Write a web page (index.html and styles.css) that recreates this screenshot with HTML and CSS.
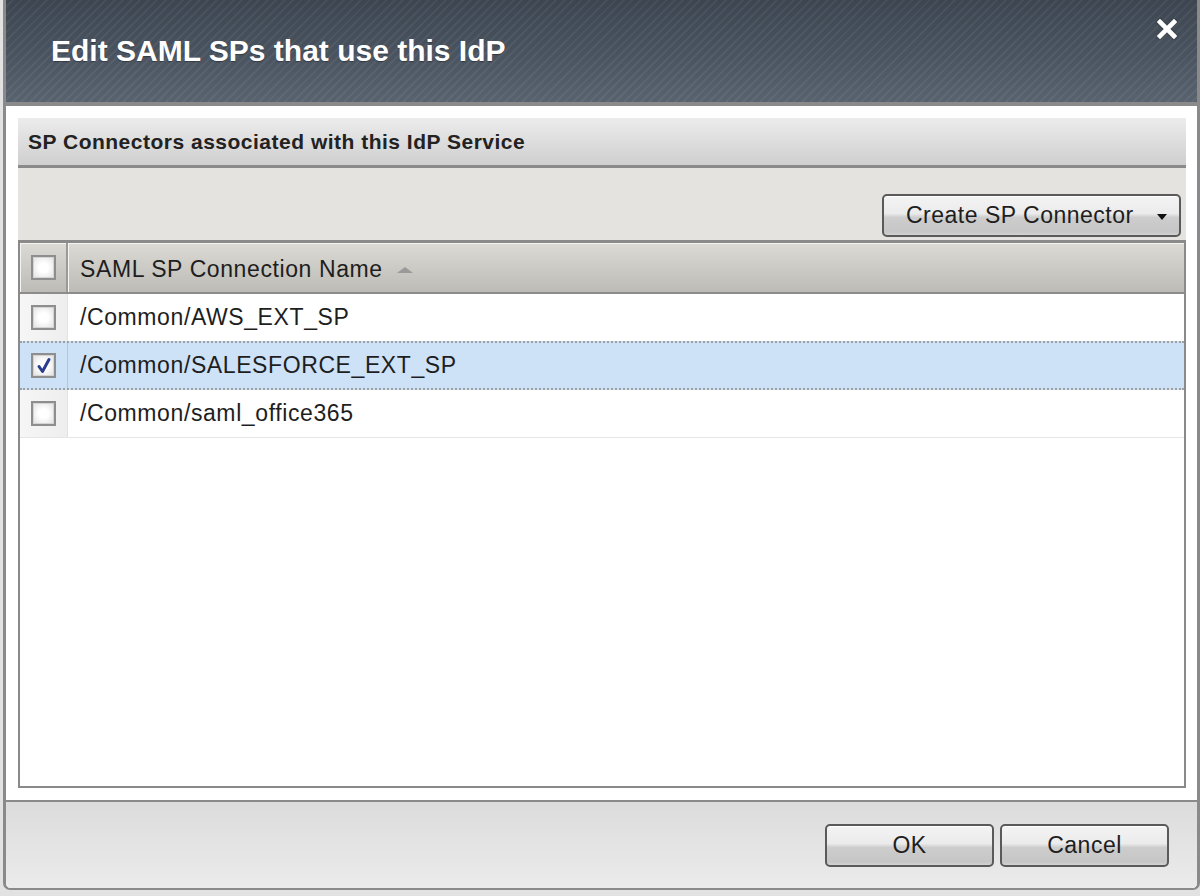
FILE: index.html
```html
<!DOCTYPE html>
<html lang="en">
<head>
<meta charset="utf-8">
<title>Edit SAML SPs that use this IdP</title>
<link rel="stylesheet" href="styles.css">
</head>
<body>
<div class="dialog">
  <div class="titlebar">
    <h1 class="title">Edit SAML SPs that use this IdP</h1>
    <button class="close" aria-label="Close">
      <svg width="20" height="20" viewBox="0 0 20 20"><path d="M3 3 L17 17 M17 3 L3 17" stroke="#fff" stroke-width="4.6" stroke-linecap="square" fill="none"/></svg>
    </button>
  </div>
  <div class="body">
    <div class="section">
      <div class="section-head">SP Connectors associated with this IdP Service</div>
      <div class="toolbar">
        <button class="btn btn-menu">Create SP Connector <span class="caret"></span></button>
      </div>
      <div class="grid">
        <div class="row head">
          <div class="cell-check"><span class="cb"></span></div>
          <div class="cell-name">SAML SP Connection Name <span class="sort"></span></div>
        </div>
        <div class="row">
          <div class="cell-check"><span class="cb"></span></div>
          <div class="cell-name">/Common/AWS_EXT_SP</div>
        </div>
        <div class="row selected">
          <div class="cell-check"><span class="cb checked"><svg width="18" height="18" viewBox="0 0 18 18"><path d="M4 9.5 L7.5 14.5 L14 2.5" stroke="#2b3d8f" stroke-width="3" fill="none" stroke-linejoin="round" stroke-linecap="round"/></svg></span></div>
          <div class="cell-name">/Common/SALESFORCE_EXT_SP</div>
        </div>
        <div class="row">
          <div class="cell-check"><span class="cb"></span></div>
          <div class="cell-name">/Common/saml_office365</div>
        </div>
      </div>
    </div>
  </div>
  <div class="footer">
    <button class="btn btn-foot">OK</button>
    <button class="btn btn-foot">Cancel</button>
  </div>
</div>
</body>
</html>
```
FILE: styles.css
```css
* { box-sizing: border-box; }
html, body { margin: 0; padding: 0; }
body {
  background: #e2e2e2;
  font-family: "Liberation Sans", Arial, sans-serif;
  color: #1e1e1e;
  width: 1200px;
  height: 896px;
  overflow: hidden;
}
.dialog {
  margin-left: 3px;
  width: 1197px;
  border-style: solid;
  border-color: #8a8a8a;
  border-width: 0 3px 2px 3px;
  border-radius: 0 0 7px 7px;
  overflow: hidden;
  background: #fff;
}
.titlebar {
  height: 106px;
  border-bottom: 4px solid #8a8a8a;
  display: flex;
  align-items: flex-start;
  background:
    repeating-linear-gradient(135deg, rgba(255,255,255,0) 0px, rgba(255,255,255,0) 4px, rgba(255,255,255,0.05) 4px, rgba(255,255,255,0.05) 6px),
    linear-gradient(#3c4550 0%, #4a5460 55%, #58636f 100%);
}
.title {
  flex: 1;
  margin: 0;
  padding: 0 0 0 45px;
  line-height: 102px;
  height: 102px;
  font-size: 30px;
  font-weight: bold;
  color: #fff;
  text-shadow: 0 1px 1px rgba(0,0,0,0.35);
}
.close {
  margin: 19px 20px 0 0;
  padding: 0;
  border: 0;
  background: none;
  width: 20px;
  height: 20px;
  filter: drop-shadow(0 0 1px rgba(0,0,0,0.4));
}
.close svg { display: block; }
.body {
  padding: 12px 11px 12px 12px;
  background: #fff;
}
.section { display: flex; flex-direction: column; }
.section-head {
  height: 50px;
  border-bottom: 3px solid #8a8a8a;
  background: linear-gradient(#ececec, #cfcfcf);
  padding-left: 10px;
  line-height: 48px;
  font-size: 21px;
  letter-spacing: 0.5px;
  font-weight: bold;
  color: #222;
}
.toolbar {
  height: 72px;
  background: #e4e3df;
  display: flex;
  justify-content: flex-end;
  align-items: flex-end;
  padding: 0 5px 3px 0;
}
.btn {
  font-family: "Liberation Sans", Arial, sans-serif;
  font-size: 23px;
  letter-spacing: 0.5px;
  color: #1e1e1e;
  border: 2px solid #5a5a5a;
  border-radius: 5px;
  background: linear-gradient(#f4f4f4 0%, #ebebeb 45%, #cdcdcd 55%, #c6c6c6 92%, #d4d4d4 100%);
  height: 43px;
  padding: 0;
  display: inline-flex;
  align-items: center;
  justify-content: center;
  box-shadow: inset 0 1px 0 #fff;
}
.btn-menu {
  width: 299px;
  padding: 0 12px 0 22px;
  justify-content: space-between;
}
.caret {
  width: 0;
  height: 0;
  border-left: 5px solid transparent;
  border-right: 5px solid transparent;
  border-top: 6px solid #111;
  margin-top: 2px;
}
.grid {
  height: 548px;
  border: 2px solid #8a8a8a;
  border-top-width: 3px;
  background: #fff;
}
.row {
  display: flex;
  height: 48px;
  border-bottom: 1px solid #e6e6e6;
  font-size: 23px;
  letter-spacing: 0.6px;
}
.row.head {
  height: 51px;
  border-bottom: 2px solid #8c8c8c;
  background: linear-gradient(#dcdad4, #bdbbb5);
  box-shadow: inset 0 1px 0 #f4f4f2, inset 1px 0 0 #f4f4f2;
}
.cell-check {
  width: 48px;
  flex: none;
  display: flex;
  align-items: center;
  justify-content: center;
  border-right: 1px solid #e2e2e2;
  background: linear-gradient(90deg, #f6f6f6, #eeeeee);
}
.row.head .cell-check {
  background: none;
  border-right: 2px solid #9a9a98;
  box-shadow: 1px 0 0 #f6f6f4;
}
.cell-name {
  flex: 1;
  display: flex;
  align-items: center;
  padding-left: 12px;
}
.row.head .cell-name { padding-top: 3px; }
.cb {
  width: 25px;
  height: 25px;
  border: 2px solid #8e8e8e;
  background: radial-gradient(circle, #ffffff 30%, #e0e0e0 100%);
  box-shadow: inset 0 0 0 1px #d4d4d4;
  display: flex;
  align-items: center;
  justify-content: center;
}
.cb svg { display: block; }
.sort {
  margin-left: 14px;
  width: 0;
  height: 0;
  border-left: 8px solid transparent;
  border-right: 8px solid transparent;
  border-bottom: 6px solid #9a9a9a;
  margin-top: 2px;
}
.row.selected {
  background: #cde1f7;
  border-top: 2px dotted #a0a0a0;
  border-bottom: 2px dotted #a0a0a0;
  height: 49px;
  margin-top: -1px;
}
.row.selected .cell-check {
  background: #cde1f7;
  border-right: 1px solid #d8b8b8;
}
.footer {
  height: 88px;
  border-top: 2px solid #8a8a8a;
  background: linear-gradient(#dcdcdc, #ebebeb);
  display: flex;
  justify-content: flex-end;
  align-items: center;
  gap: 6px;
  padding: 0 28px 0 0;
}
.btn-foot { width: 169px; }
```
